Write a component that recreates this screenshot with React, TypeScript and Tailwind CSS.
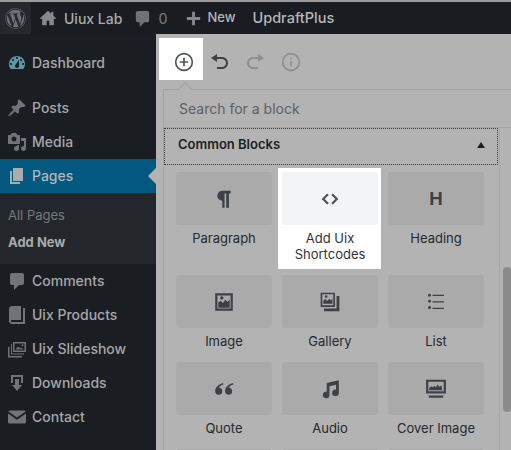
import React from 'react';
import { FaWordpress } from 'react-icons/fa';

const Dash = ({ d, className }: { d: string; className?: string }) => (
  <svg viewBox="0 0 20 20" fill="currentColor" fillRule="evenodd" className={className}>
    <path d={d} />
  </svg>
);

const icons = {
  home: 'M10 2 1 10.2l1.2 1.2L3.5 10.3V18h5v-5h3v5h5v-7.7l1.3 1.1 1.2-1.2-3-2.7V3h-2.5v2.3L10 2z',
  comment: 'M5 2h10c1.1 0 2 .9 2 2v8c0 1.1-.9 2-2 2h-3l-5 5v-5H5c-1.1 0-2-.9-2-2V4c0-1.1.9-2 2-2z',
  plus: 'M8.5 3h3v5.5H17v3h-5.5V17h-3v-5.5H3v-3h5.5z',
  dashboard:
    'M3.76 16h12.48c1.1-1.37 1.76-3.11 1.76-5 0-4.42-3.58-8-8-8s-8 3.58-8 8c0 1.89.66 3.63 1.76 5zM10 4c.55 0 1 .45 1 1s-.45 1-1 1-1-.45-1-1 .45-1 1-1zM6 6c.55 0 1 .45 1 1s-.45 1-1 1-1-.45-1-1 .45-1 1-1zm8 0c.55 0 1 .45 1 1s-.45 1-1 1-1-.45-1-1 .45-1 1-1zm-5.37 5.55L12 7v6c0 1.1-.9 2-2 2s-2-.9-2-2c0-.57.24-1.08.63-1.45zM4 10c.55 0 1 .45 1 1s-.45 1-1 1-1-.45-1-1 .45-1 1-1zm12 0c.55 0 1 .45 1 1s-.45 1-1 1-1-.45-1-1 .45-1 1-1z',
  pin: 'M10.44 3.02l1.82-1.82 6.36 6.35-1.83 1.82c-1.05-.68-2.48-.57-3.41.36l-.75.75c-.92.93-1.04 2.35-.35 3.41l-1.83 1.82-2.41-2.41-2.8 2.79c-.42.42-3.38 2.71-3.8 2.29s1.86-3.39 2.28-3.81l2.79-2.79L4.1 9.36l1.83-1.82c1.05.69 2.48.57 3.4-.36l.75-.75c.93-.92 1.05-2.35.36-3.41z',
  media:
    'M13 11V4c0-.55-.45-1-1-1h-1.67L9 1H5L3.67 3H2c-.55 0-1 .45-1 1v7c0 .55.45 1 1 1h10c.55 0 1-.45 1-1zM7 4.5c1.38 0 2.5 1.12 2.5 2.5S8.38 9.5 7 9.5 4.5 8.38 4.5 7 5.62 4.5 7 4.5zM14 6h5v10.5c0 1.38-1.12 2.5-2.5 2.5S14 17.88 14 16.5s1.12-2.5 2.5-2.5c.17 0 .34.02.5.05V9h-3V6zm-4 8.05V13h2v3.5c0 1.38-1.12 2.5-2.5 2.5S7 17.88 7 16.5 8.12 14 9.5 14c.17 0 .34.02.5.05z',
  page: 'M6 15V2h10v13H6zm-1 1h8v2H3V5h2v11z',
  book: 'M16 3h2v16H5c-1.66 0-3-1.34-3-3V4c0-1.66 1.34-3 3-3h9v14H5c-.55 0-1 .45-1 1s.45 1 1 1h11V3z',
  slides:
    'M6 3h13v10H6V3zm1.5 1.5v7h10v-7h-10zM8.5 10.5l2.5-3 2 2 1-1 2.5 2h-8zM15.5 5.2a1 1 0 1 1 0 2 1 1 0 0 1 0-2zM4 5h1v9.5h12v1H4V5zM1 8h1.5v9H15v1.5H1V8z',
  download: 'M14.01 4v6h2V2H4v8h2.01V4h8zm-2 2v6h3l-5 6-5-6h3V6h4z',
  mail: 'M3 3.5h14c.8 0 1.4.4 1.7 1L10 10.5 1.3 4.5c.3-.6.9-1 1.7-1zM1 6.6l9 6.2 9-6.2V15c0 .9-.7 1.5-1.5 1.5h-15C1.7 16.5 1 15.9 1 15z',
  undo: 'M12 5H7V2L1 6l6 4V7h5c2.2 0 4 1.8 4 4s-1.8 4-4 4H7v2h5c3.3 0 6-2.7 6-6s-2.7-6-6-6z',
  redo: 'M8 5h5V2l6 4-6 4V7H8c-2.2 0-4 1.8-4 4s1.8 4 4 4h5v2H8c-3.3 0-6-2.7-6-6s2.7-6 6-6z',
  pilcrow: 'M8.5 2.5H16V5h-1.5v13H12V5h-1.5v13H8.4v-6.5a4.5 4.5 0 0 1 .1-9z',
  code: 'M7.2 4.5 8.7 6l-4 4 4 4-1.500 1.500L1.7 10zM12.8 4.500 11.3 6l4 4-4 4 1.500 1.500 5.500-5.500z',
  image:
    'M2 2h16v16H2V2zM4 4v12h12V4H4zM4.8 15.2v-4.700L7 8.800l2 2 2.200-2.800 2 2 2-2.500v7.700H4.800zM8 4.800a1.500 1.500 0 1 1 0 3 1.500 1.500 0 0 1 0-3z',
  gallery:
    'M1.500 1.500h13v13h-13v-13zM3 3v10h10V3H3zM3.800 12.200V9l2-1.800 1.800 1.800 1.700-2 1.500 1.500 1.400-1.500v4.700H3.800zM6.500 3.800a1.200 1.200 0 1 1 0 2.400 1.200 1.200 0 0 1 0-2.400zM16 4.500h2.500v14h-14V16H16V4.500z',
  list: 'M2 3.200a1.500 1.500 0 1 1 0 .01zM6.500 2.700H18v1.300H6.500zM2 9.300a1.500 1.500 0 1 1 0 .01zM6.500 9.200H18v1.300H6.500zM2 15.500a1.500 1.500 0 1 1 0 .01zM6.500 15.700H18V17H6.500z',
  quote:
    'M9 4.500C5.500 5.500 2 8 2 12a3.200 3.200 0 1 0 3.600-3.200C6 7.500 7.500 6.500 9.500 6zM18 4.500C14.500 5.500 11 8 11 12a3.200 3.200 0 1 0 3.600-3.200c.4-1.300 1.900-2.300 3.900-2.800z',
  audio: 'M7 4.500 18 2v11.500a3 3 0 1 1-2.500-3V6.200L9.500 7.500v8a3 3 0 1 1-2.500-3z',
  cover:
    'M1 1.500h18V14H1V1.500zm2 2v8.500h14V3.500H3zM3.800 11.200V9l1.700-1.500 1.500 1 1.500-1.500 1.500 1.500 1.500-2.500 1.500 2 2-1.500.700 4.700H3.800zM3.500 16h13v2h-13z',
};

type SideItem = { label: string; icon: string; cls?: string; color?: string };

const SideRow = ({ label, icon, color = 'text-[#707378]', cls = '' }: SideItem) => (
  <div className={`flex h-[34px] items-center text-[14px] font-medium text-[#a5a7a9] ${cls}`}>
    <div className="flex w-[32px] justify-center pl-[1px]">
      <Dash d={icon} className={`h-[20px] w-[20px] ${color}`} />
    </div>
    <span className="mb-[1px]">{label}</span>
  </div>
);

const Sidebar = () => (
  <div className="w-[156px] shrink-0 bg-[#1a1d22] pt-[12px]">
    <SideRow label="Dashboard" icon={icons.dashboard} color="text-[#5b98a6]" />
    <div className="mt-[11px]">
      <SideRow label="Posts" icon={icons.pin} />
      <SideRow label="Media" icon={icons.media} />
    </div>
    <div className="relative flex h-[34px] items-center bg-[#02587f] text-[14px] font-medium text-[#b4b7b9]">
      <div className="flex w-[32px] justify-center pl-[1px]">
        <Dash d={icons.page} className="h-[20px] w-[20px] text-[#a9adb0]" />
      </div>
      <span className="mb-[1px]">Pages</span>
      <span className="absolute right-0 top-[9px] h-0 w-0 border-y-[8px] border-r-[8px] border-y-transparent border-r-[#b3b3b3]" />
    </div>
    <div className="flex h-[71px] flex-col bg-[#23272b] pl-[8px] pt-[9px] text-[13px]">
      <div className="flex h-[27px] items-center text-[#77797c]">All Pages</div>
      <div className="flex h-[27px] items-center font-bold text-[#a9abad]">Add New</div>
    </div>
    <SideRow label="Comments" icon={icons.comment} />
    <SideRow label="Uix Products" icon={icons.book} />
    <SideRow label="Uix Slideshow" icon={icons.slides} />
    <SideRow label="Downloads" icon={icons.download} />
    <SideRow label="Contact" icon={icons.mail} />
  </div>
);

const TopBar = () => (
  <div className="flex h-[34px] shrink-0 items-center border-t-2 border-[#9b9b9b] bg-[#191c20] text-[14px] font-medium text-[#a9abad]">
    <div className="flex h-full w-[31px] items-center justify-center bg-[#25292c]">
      <FaWordpress className="h-[21px] w-[21px] text-[#6d7175]" />
    </div>
    <Dash d={icons.home} className="ml-[8px] h-[18px] w-[18px] text-[#85888c]" />
    <span className="ml-[7px]">Uiux Lab</span>
    <Dash d={icons.comment} className="ml-[11px] h-[19px] w-[19px] text-[#6f7276]" />
    <span className="ml-[6px] text-[#6f7276]">0</span>
    <Dash d={icons.plus} className="ml-[17px] h-[19px] w-[19px] text-[#85888c]" />
    <span className="ml-[4px] text-[13px] text-[#b5b7b9]">New</span>
    <span className="ml-[17px] text-[14.5px] text-[#b5b7b9]">UpdraftPlus</span>
  </div>
);

const blocks: { label: string; icon?: string; small?: boolean; white?: boolean }[] = [
  { label: 'Paragraph', icon: icons.pilcrow },
  { label: 'Add Uix Shortcodes', icon: icons.code, small: true, white: true },
  { label: 'Heading' },
  { label: 'Image', icon: icons.image },
  { label: 'Gallery', icon: icons.gallery },
  { label: 'List', icon: icons.list, small: true },
  { label: 'Quote', icon: icons.quote },
  { label: 'Audio', icon: icons.audio },
  { label: 'Cover Image', icon: icons.cover },
  { label: '' },
  { label: '' },
  { label: '' },
];

const BlockTile = ({ label, icon, small, white }: { label: string; icon?: string; small?: boolean; white?: boolean }) => (
  <div className={`pb-[7px] pl-[4px] pr-[3px] pt-[4px] text-center ${white ? 'bg-white' : ''}`}>
    <div
      className={`flex h-[53px] items-center justify-center rounded-[3px] ${
        white ? 'bg-[#f3f4f5] text-[#4a5058]' : 'bg-[#aaaaaa] text-[#3d4147]'
      }`}
    >
      {icon ? (
        <Dash d={icon} className={small ? 'h-[20px] w-[20px]' : 'h-[22px] w-[22px]'} />
      ) : (
        label && <span className="text-[18px] font-bold">H</span>
      )}
    </div>
    <div className={`mt-[5px] text-[13px] leading-[16px] ${white ? 'text-[#30343a]' : 'text-[#26292e]'}`}>{label}</div>
  </div>
);

const Editor = () => (
  <div className="relative flex min-w-0 flex-1 flex-col bg-[#b3b3b3]">
    <div className="flex h-[55px] shrink-0 items-start pl-[3px] pt-[4px]">
      <div className="flex h-[42px] w-[44px] items-center justify-center bg-white pl-[6px] pt-[6px]">
        <svg viewBox="0 0 24 24" fill="none" stroke="#50555c" strokeWidth="2" className="h-[20px] w-[20px]">
          <circle cx="12" cy="12" r="10" />
          <path d="M12 7v10M7 12h10" />
        </svg>
      </div>
      <div className="ml-[7px] mt-[14px] flex items-center gap-[15px]">
        <Dash d={icons.undo} className="h-[20px] w-[20px] text-[#3d4147]" />
        <Dash d={icons.redo} className="h-[20px] w-[20px] text-[#8e8f91]" />
        <svg viewBox="0 0 24 24" fill="none" stroke="#8e8f91" strokeWidth="2" className="ml-[1px] h-[20px] w-[20px]">
          <circle cx="12" cy="12" r="10" />
          <path d="M12 11v6M12 7v2" />
        </svg>
      </div>
    </div>
    <div className="relative ml-[7px] flex min-h-0 flex-1 flex-col border-l border-t border-[#a3a3a3]">
      <span className="absolute left-[16px] top-[-6px] h-[10px] w-[10px] rotate-45 border-l border-t border-[#a3a3a3] bg-[#b3b3b3]" />
      <div className="flex h-[38px] shrink-0 items-center border-b border-[#a3a3a3] pl-[15px] text-[14px] text-[#5c6066]">
        Search for a block
      </div>
      <div className="flex min-h-0 flex-1">
        <div className="w-[334px] shrink-0 overflow-hidden">
          <div className="flex h-[37px] items-center justify-between border border-dotted border-[#3a3a3a] pb-[3px] pl-[13px] pr-[12px] text-[13px] font-semibold text-[#1c1f23]">
            Common Blocks
            <span className="h-0 w-0 border-x-[4px] border-b-[6px] border-x-transparent border-b-[#1c1f23]" />
          </div>
          <div className="grid grid-cols-[103px_103px_103px] gap-x-[3px] gap-y-[2px] pl-[8px] pt-[3px]">
            {blocks.map((b, i) => (
              <BlockTile key={i} {...b} />
            ))}
          </div>
        </div>
        <div className="ml-[1px] w-[13px] shrink-0 border-l border-[#a6a6a6] pl-[3px] pt-[139px]">
          <div className="h-[145px] w-[8px] rounded-full bg-[#8a8a8a]" />
        </div>
      </div>
    </div>
  </div>
);

export default function App() {
  return (
    <div className="flex h-[450px] w-[511px] flex-col overflow-hidden font-['Inter',sans-serif]">
      <TopBar />
      <div className="flex min-h-0 flex-1">
        <Sidebar />
        <Editor />
      </div>
    </div>
  );
}
